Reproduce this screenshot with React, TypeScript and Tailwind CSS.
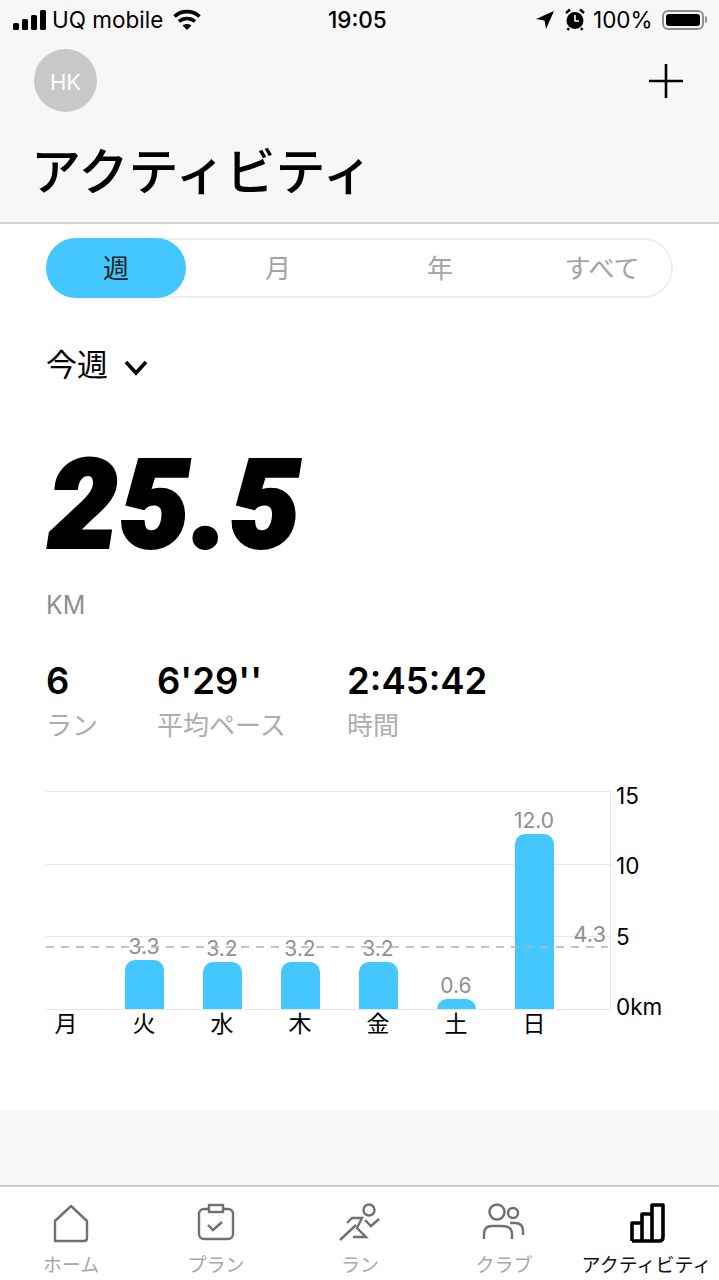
const JP = "font-['Inter','Noto_Sans_CJK_JP',sans-serif]";

const days = [
  { label: '月', km: 0, value: '' },
  { label: '火', km: 3.3, value: '3.3' },
  { label: '水', km: 3.2, value: '3.2' },
  { label: '木', km: 3.2, value: '3.2' },
  { label: '金', km: 3.2, value: '3.2' },
  { label: '土', km: 0.6, value: '0.6' },
  { label: '日', km: 12, value: '12.0' },
];

const stats = [
  { value: '6', label: 'ラン', width: 'w-[111px]' },
  { value: "6'29''", label: '平均ペース', width: 'w-[190px]' },
  { value: '2:45:42', label: '時間', width: 'w-[160px]' },
];

function StatusBar() {
  return (
    <div className="h-[39px] flex items-center pl-[13px] pr-[12px] text-[22.5px] text-black relative">
      <svg width="33" height="20" viewBox="0 0 33 20" fill="currentColor">
        <rect x="0" y="13" width="6" height="7" rx="1.5" />
        <rect x="9" y="9" width="6" height="11" rx="1.5" />
        <rect x="18" y="5" width="6" height="15" rx="1.5" />
        <rect x="27" y="0" width="6" height="20" rx="1.5" />
      </svg>
      <span className="ml-[6px]">UQ mobile</span>
      <svg className="ml-[10px]" width="28" height="22" viewBox="0 0 28 22" fill="none" stroke="currentColor" strokeWidth="3.6">
        <path d="M1.5 7.5 C8.5 1 19.5 1 26.5 7.5" />
        <path d="M6 12.5 C10.5 8.5 17.5 8.5 22 12.5" />
        <path d="M14 21 L9.6 16.6 C12 14.6 16 14.6 18.4 16.6 Z" fill="currentColor" stroke="none" />
      </svg>
      <span className="absolute left-[328px] font-medium">19:05</span>
      <div className="flex-1" />
      <svg width="18" height="18" viewBox="0 0 18 18" fill="currentColor">
        <path d="M18 0 L0 8 L8.5 9.5 L10 18 Z" />
      </svg>
      <svg className="ml-[11px]" width="20" height="23" viewBox="0 0 20 23">
        <circle cx="10" cy="12.5" r="8.5" fill="currentColor" />
        <path d="M10 7 V13 H14" stroke="#f7f7f7" strokeWidth="1.6" fill="none" />
        <path d="M1 5 L5 1.5 M19 5 L15 1.5 M4 20 L2.5 22 M16 20 L17.5 22" stroke="currentColor" strokeWidth="2.4" />
      </svg>
      <span className="ml-[8px] w-[59px]">100%</span>
      <div className="ml-[10px] flex items-center">
        <div className="w-[42px] h-[20px] rounded-[6px] border-2 border-[#8e8e8e] p-[2px]">
          <div className="w-full h-full rounded-[3px] bg-black" />
        </div>
        <div className="ml-[1px] w-[2px] h-[7px] bg-[#8e8e8e] rounded-r-sm" />
      </div>
    </div>
  );
}

function Header() {
  return (
    <header className="h-[224px] shrink-0 bg-[#f7f7f7] border-b-2 border-[#d4d4d4]">
      <StatusBar />
      <div className="flex items-center justify-between pl-[34px] pr-[36px] mt-[10px]">
        <div className="w-[63px] h-[63px] rounded-full bg-[#c8c8c8] flex items-center justify-center pt-[3px] text-white text-[22px]">HK</div>
        <svg width="34" height="34" viewBox="0 0 34 34" stroke="black" strokeWidth="2.6">
          <path d="M17 0 V34 M0 17 H34" />
        </svg>
      </div>
      <h1 className="pl-[31px] mt-[25px] text-[50px] leading-[70px] font-medium text-black">アクティビティ</h1>
    </header>
  );
}

function RangeTabs() {
  const tabs = ['週', '月', '年', 'すべて'];
  return (
    <div className="mx-[46px] mt-[14px] h-[60px] rounded-full border-2 border-[#eeeeee] flex">
      <div className="-mx-[13px] flex">
        {tabs.map((tab, i) => (
          <div key={tab} className="w-[162px] -my-[2px] flex justify-center">
            <div
              className={`w-[140px] rounded-full flex items-center justify-center text-[26px] ${
                i === 0 ? 'bg-[#44c6ff] text-[#222]' : 'text-[#a3a3a3]'
              }`}
            >
              {tab}
            </div>
          </div>
        ))}
      </div>
    </div>
  );
}

function Chart() {
  const h = 218;
  const toPx = (km: number) => (km / 15) * h;
  return (
    <div className="relative mt-[46px] h-[218px] ml-[46px] w-[565px] border-r border-[#e4e4e4]">
      {/* grid */}
      {[0, 73, 145, 218].map(top => (
        <div key={top} className="absolute left-0 right-0 h-[1px] bg-[#e8e8e8]" style={{ top }} />
      ))}
      {/* bars */}
      <div className="absolute -left-[19px] bottom-0 flex items-end">
        {days.map(d => (
          <div key={d.label} className="w-[78px] flex flex-col items-center relative">
            {d.value && <span className="text-[21px] leading-[26px] text-[#8f8f8f] relative">{d.value}</span>}
            {d.km > 0 && (
              <div className="w-[39px] bg-[#44c6ff] rounded-t-[10px]" style={{ height: toPx(d.km) + 1 }} />
            )}
            <span className="absolute top-full text-[23px] leading-[30px] text-black">{d.label}</span>
          </div>
        ))}
      </div>
      {/* average line sits over the bars */}
      <div className="absolute left-0 right-[2px] top-[155px] h-[2px] bg-[repeating-linear-gradient(to_right,#b4b4b4cc_0,#b4b4b4cc_8px,transparent_8px,transparent_15px)]" />
      <span className="absolute right-[4px] top-[130px] text-[22px] leading-[26px] text-[#8f8f8f]">4.3</span>
      {/* y axis */}
      {[
        { t: '15', top: -9 },
        { t: '10', top: 61 },
        { t: '5', top: 132 },
        { t: '0km', top: 202 },
      ].map(a => (
        <span key={a.t} className="absolute left-[570px] text-[22.5px] leading-[28px] text-black" style={{ top: a.top }}>
          {a.t}
        </span>
      ))}
    </div>
  );
}

function TabIcon({ name }: { name: string }) {
  const common = { width: 44, height: 44, viewBox: '0 0 44 44', fill: 'none', stroke: 'currentColor', strokeWidth: 2.4 };
  if (name === 'home')
    return (
      <svg {...common}>
        <path d="M22 5 L38 20 V37 Q38 40 35 40 H6 V20 Z" strokeLinejoin="round" />
      </svg>
    );
  if (name === 'plan')
    return (
      <svg {...common}>
        <rect x="5" y="8" width="34" height="30" rx="5" />
        <rect x="15" y="4" width="14" height="7" fill="#fff" />
        <path d="M14 24 L19 29 L28 21" />
      </svg>
    );
  if (name === 'run')
    return (
      <svg {...common}>
        <circle cx="31" cy="9" r="5.5" />
        <path d="M9 22 L14 17 H24 L19 27 L28 36 H15" />
        <path d="M2 39 L18 24" />
        <path d="M27 19 L33 25 L41 18" />
      </svg>
    );
  if (name === 'club')
    return (
      <svg {...common}>
        <circle cx="15" cy="11" r="7.5" />
        <circle cx="31" cy="12" r="5" />
        <path d="M2 38 V33 Q2 25 10 25 H20 Q30 25 30 33 V38" />
        <path d="M28 22 H33 Q41 22 41 30 V34" />
      </svg>
    );
  return (
    <svg {...common} strokeWidth={3.6}>
      <path d="M5 40 V22 H15 V40 M15 40 V13 H25 V40 M25 40 V4 H36 V36 Q36 40 32 40 H5" strokeLinejoin="round" />
    </svg>
  );
}

function TabBar() {
  const items = [
    { icon: 'home', label: 'ホーム', x: 'w-[142px]' },
    { icon: 'plan', label: 'プラン', x: 'w-[148px]' },
    { icon: 'run', label: 'ラン', x: 'w-[140px]' },
    { icon: 'club', label: 'クラブ', x: 'w-[148px]' },
    { icon: 'stats', label: 'アクティビティ', x: 'w-[141px]', active: true },
  ];
  return (
    <nav className="h-[95px] shrink-0 bg-white border-t-2 border-[#cfcfcf] flex">
      {items.map(it => (
        <div key={it.icon} className={`${it.x} flex flex-col items-center pt-[14px] ${it.active ? 'text-black' : 'text-[#707070]'}`}>
          <TabIcon name={it.icon} />
          <span className={`mt-[7px] text-[19px] leading-[28px] whitespace-nowrap ${it.active ? '-ml-[4px] text-[#111]' : 'text-[#a8a8a8]'}`}>
            {it.label}
          </span>
        </div>
      ))}
    </nav>
  );
}

export default function App() {
  return (
    <div className={`w-[719px] h-[1280px] overflow-hidden bg-white flex flex-col ${JP}`}>
      <Header />
      <main className="flex-1 flex flex-col">
        <RangeTabs />
        <div className="ml-[46px] mt-[44px] flex items-center h-[46px]">
          <span className="text-[31px] text-black">今週</span>
          <svg className="ml-[16px] mt-[6px]" width="24" height="16" viewBox="0 0 24 16" fill="none" stroke="black" strokeWidth="3.6">
            <path d="M2 2 L12 13 L22 2" />
          </svg>
        </div>
        <div className="ml-[49px] mt-[39px] h-[150px] pt-[7px] flex items-center font-['Roboto',sans-serif] text-[122px] tracking-[3px] leading-none font-black italic text-black [-webkit-text-stroke:4px_black]">25.5</div>
        <div className="ml-[46px] mt-[11px] text-[25px] leading-[34px] text-[#8f8f8f]">KM</div>
        <div className="ml-[46px] mt-[36px] flex">
          {stats.map(s => (
            <div key={s.label} className={s.width}>
              <div className="text-[36.5px] leading-[46px] font-semibold text-black">{s.value}</div>
              <div className="mt-[3px] text-[26px] leading-[38px] text-[#adadad]">{s.label}</div>
            </div>
          ))}
        </div>
        <Chart />
        <div className="h-[101px]" />
        <div className="flex-1 bg-[#f7f7f7]" />
      </main>
      <TabBar />
    </div>
  );
}
